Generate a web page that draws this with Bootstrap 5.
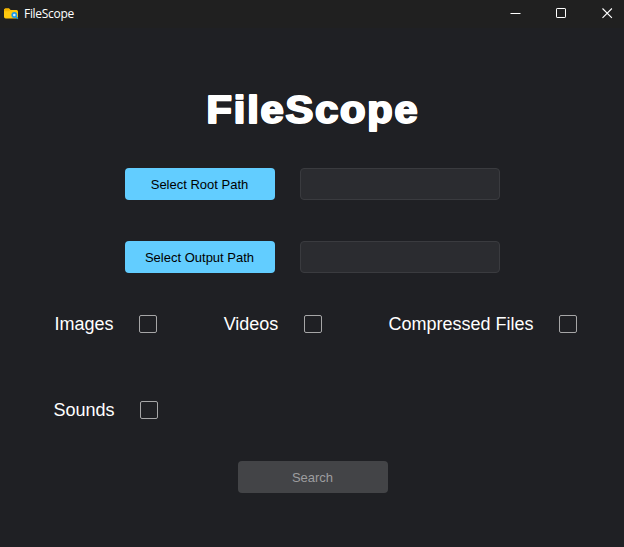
<!DOCTYPE html>
<html lang="en" data-bs-theme="dark">
<head>
<meta charset="utf-8">
<meta name="viewport" content="width=device-width, initial-scale=1">
<title>FileScope</title>
<link href="https://cdn.jsdelivr.net/npm/bootstrap@5.3.0/dist/css/bootstrap.min.css" rel="stylesheet">
<style>
body{background:#1f2024;color:#fff;font-family:"Liberation Sans",Arial,sans-serif;height:547px;overflow:hidden}
.titlebar{height:28px;background:#202020;font:12px/28px "Open Sans","Noto Sans",sans-serif;padding-left:4px}
.titlebar svg{display:block}
.app-name{margin-left:5px;letter-spacing:-.3px}
.win-controls{gap:35px;padding:0 11px 2px 0}
.brand-title{font:700 39.5px/48px "Liberation Sans",Arial,sans-serif;margin:57px 0 0;height:48px;letter-spacing:1.8px;-webkit-text-stroke:1.8px #fff;text-shadow:1px 0 #fff,-1px 0 #fff;transform:scaleX(1.05);padding-left:2px}
.path-row{gap:25px;height:32px}
.row-root{margin-top:35px}
.row-output{margin-top:41px}
.btn-path,.btn-search{width:150px;height:32px;padding:1px 0 0;font-size:13px;line-height:32px;border:0;border-radius:4px}
.btn-path,.btn-path:hover{background:#62cdff;color:#000}
.path-input{width:200px;height:32px;min-height:0;padding:0 8px;background:#2b2c30!important;border:1px solid #3a3b3f;border-radius:4px;font-size:13px}
.filters{height:18px;font-size:18px;line-height:18px}
.filters label{white-space:nowrap}
.filters label span{margin-left:-.5px;margin-right:.5px}
.filters .form-check-input{width:18px;height:18px;margin:0 0 0 25px;border:1px solid #a6a6a7;border-radius:2px;background-color:#1f2024;flex-shrink:0}
.filters-top{margin-top:42px;padding:0 47px 0 55px}
.filters-bottom{margin-top:68px;padding-left:54px}
.btn-search,.btn-search:disabled{background:#434447;color:#9d9d9f;opacity:1}
.search-wrap{margin-top:42px;padding-left:1px}
</style>
<script src="https://cdn.jsdelivr.net/npm/bootstrap@5.3.0/dist/js/bootstrap.bundle.min.js"></script>
</head>
<body>
<header class="titlebar d-flex align-items-center justify-content-between">
  <div class="d-flex align-items-center">
    <svg width="15" height="14" viewBox="0 0 15 14"><path d="M0 3Q0 1.5 1.5 1.5H5L6.5 3H12.7Q14 3 14 4.5V9.8Q14 11.5 12.3 11.5H1.7Q0 11.5 0 9.8Z" fill="#ffc90e"/><path d="M0 3Q0 1.5 1.5 1.5H5L6.5 3 5 4.2H0Z" fill="#f5b400"/><circle cx="10.3" cy="8" r="2.1" fill="#d5efff" stroke="#1a9be8" stroke-width="1.6"/><path d="m12 9.8 1.8 1.9" stroke="#1a9be8" stroke-width="1.5"/></svg>
    <span class="app-name">FileScope</span>
  </div>
  <div class="win-controls d-flex align-items-center">
    <svg width="11" height="11" viewBox="0 0 11 11"><path d="M.5 5.5H10.5" stroke="#fff"/></svg>
    <svg width="11" height="11" viewBox="0 0 11 11"><rect x=".5" y=".5" width="9" height="9" rx=".6" fill="none" stroke="#fff"/></svg>
    <svg width="11" height="11" viewBox="0 0 11 11"><path d="m.5.5 9.4 9.4m0-9.4L.5 9.9" stroke="#fff" stroke-width="1.1"/></svg>
  </div>
</header>
<main class="d-flex flex-column">
  <h1 class="brand-title text-center">FileScope</h1>
  <div class="path-row row-root d-flex justify-content-center">
    <button class="btn btn-path" type="button">Select Root Path</button>
    <input class="form-control path-input" type="text" aria-label="Root path">
  </div>
  <div class="path-row row-output d-flex justify-content-center">
    <button class="btn btn-path" type="button">Select Output Path</button>
    <input class="form-control path-input" type="text" aria-label="Output path">
  </div>
  <div class="filters filters-top d-flex justify-content-between">
    <label class="d-flex"><span>Images</span><input class="form-check-input" type="checkbox"></label>
    <label class="d-flex"><span>Videos</span><input class="form-check-input" type="checkbox"></label>
    <label class="d-flex"><span>Compressed Files</span><input class="form-check-input" type="checkbox"></label>
  </div>
  <div class="filters filters-bottom d-flex">
    <label class="d-flex"><span>Sounds</span><input class="form-check-input" type="checkbox"></label>
  </div>
  <div class="search-wrap d-flex justify-content-center">
    <button class="btn btn-search" type="button" disabled>Search</button>
  </div>
</main>
</body>
</html>
